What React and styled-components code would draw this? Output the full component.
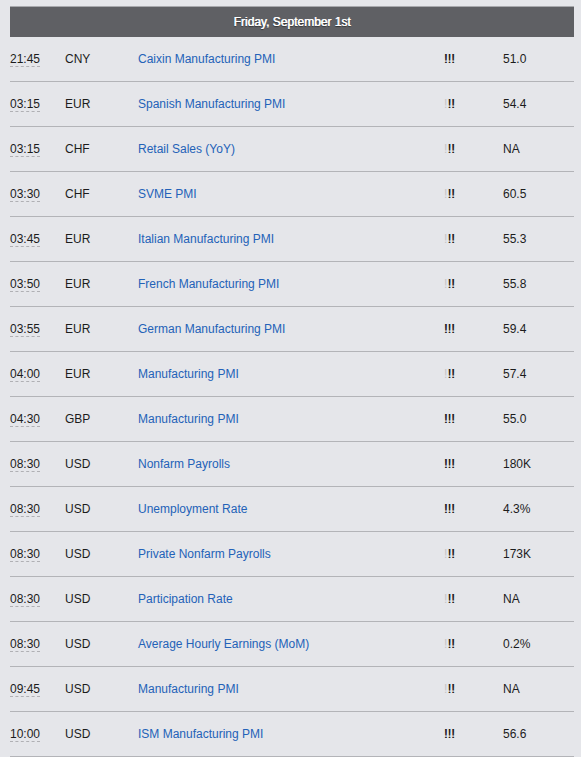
import React from 'react';
import styled, { createGlobalStyle } from 'styled-components';

const GlobalStyle = createGlobalStyle`
  html, body {
    margin: 0;
    padding: 0;
    background: #e5e6ea;
  }
  body {
    font-family: "Liberation Sans", Arial, sans-serif;
    font-size: 12px;
    color: #1c1c1c;
  }
`;

const Calendar = styled.div`
  width: 564px;
  padding: 6px 0 0 10px;
`;

const DayHeader = styled.div`
  height: 30px;
  border-top: 1px solid #a8a9ad;
  background: #5f6064;
  color: #ffffff;
  display: flex;
  align-items: center;
  justify-content: center;
  text-shadow: 0.6px 0 0 #ffffff, 0 1px 1px rgba(0, 0, 0, 0.5);
`;

const Row = styled.div`
  display: grid;
  grid-template-columns: 55px 73px 306px 59px 1fr;
  align-items: center;
  height: 44px;
  border-bottom: 1px solid #b3b4b8;
`;

const Time = styled.span`
  justify-self: start;
  border-bottom: 1px dashed #b0b0b4;
  line-height: 14px;
`;

const Currency = styled.span``;

const EventLink = styled.a`
  color: #2362b8;
  text-decoration: none;
`;

const Impact = styled.span`
  letter-spacing: 0.3px;
`;

const Bang = styled.span`
  color: ${(p) => (p.$on ? '#1c1c1c' : '#c4c4c8')};
  text-shadow: ${(p) => (p.$on ? '0.4px 0 0 #1c1c1c' : 'none')};
`;

const Value = styled.span``;

const events = [
  ['21:45', 'CNY', 'Caixin Manufacturing PMI', 3, '51.0'],
  ['03:15', 'EUR', 'Spanish Manufacturing PMI', 2, '54.4'],
  ['03:15', 'CHF', 'Retail Sales (YoY)', 2, 'NA'],
  ['03:30', 'CHF', 'SVME PMI', 2, '60.5'],
  ['03:45', 'EUR', 'Italian Manufacturing PMI', 2, '55.3'],
  ['03:50', 'EUR', 'French Manufacturing PMI', 2, '55.8'],
  ['03:55', 'EUR', 'German Manufacturing PMI', 3, '59.4'],
  ['04:00', 'EUR', 'Manufacturing PMI', 2, '57.4'],
  ['04:30', 'GBP', 'Manufacturing PMI', 3, '55.0'],
  ['08:30', 'USD', 'Nonfarm Payrolls', 3, '180K'],
  ['08:30', 'USD', 'Unemployment Rate', 3, '4.3%'],
  ['08:30', 'USD', 'Private Nonfarm Payrolls', 2, '173K'],
  ['08:30', 'USD', 'Participation Rate', 2, 'NA'],
  ['08:30', 'USD', 'Average Hourly Earnings (MoM)', 2, '0.2%'],
  ['09:45', 'USD', 'Manufacturing PMI', 2, 'NA'],
  ['10:00', 'USD', 'ISM Manufacturing PMI', 3, '56.6'],
];

const App = () => {
  return (
    <Calendar>
      <GlobalStyle />
      <DayHeader>Friday, September 1st</DayHeader>
      {events.map(([time, cur, name, level, value], i) => (
        <Row key={i}>
          <Time>{time}</Time>
          <Currency>{cur}</Currency>
          <EventLink href="#">{name}</EventLink>
          <Impact>
            <Bang $on={level >= 3}>!</Bang>
            <Bang $on={level >= 2}>!</Bang>
            <Bang $on>!</Bang>
          </Impact>
          <Value>{value}</Value>
        </Row>
      ))}
    </Calendar>
  );
};

export default App;
